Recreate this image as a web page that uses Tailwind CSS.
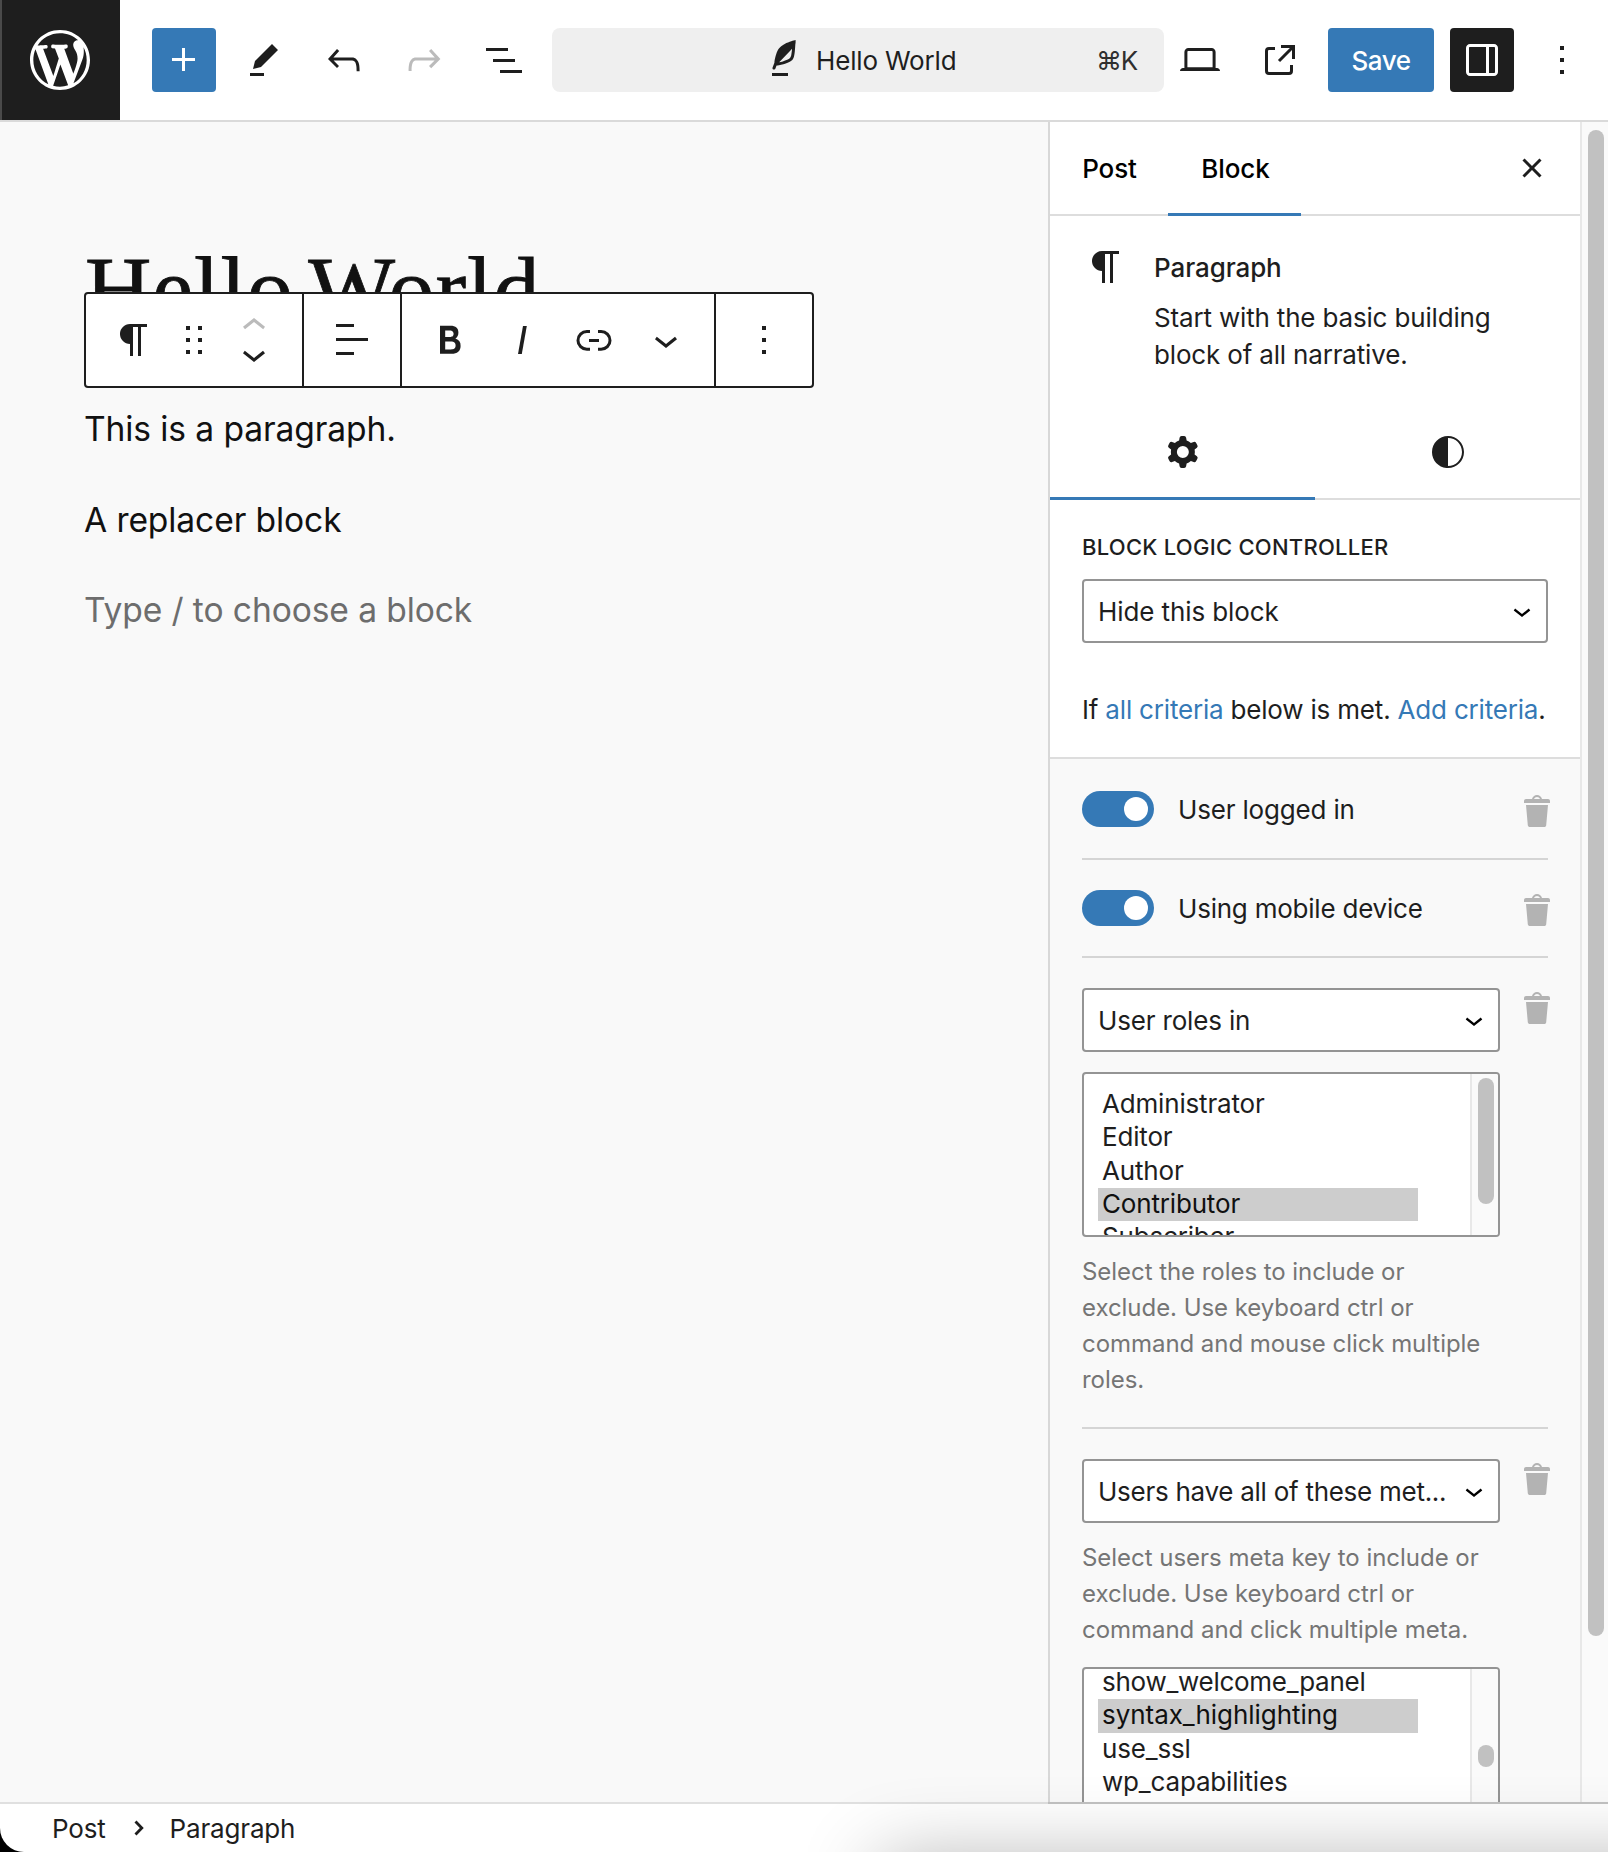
<!DOCTYPE html>
<html lang="en">
<head>
<meta charset="utf-8">
<title>Hello World</title>
<script src="https://cdn.jsdelivr.net/npm/@tailwindcss/browser@4"></script>
</head>
<body class="bg-black">
<svg class="hidden" aria-hidden="true">
  <symbol id="trash" viewBox="0 0 20 20"><path d="M12 4h3c.6 0 1 .4 1 1v1H3V5c0-.6.5-1 1-1h3c.2-1.1 1.3-2 2.5-2s2.3.9 2.5 2zM8 4h3c-.2-.6-.9-1-1.5-1S8.2 3.4 8 4zM4 7h11l-.9 10.1c0 .5-.5.9-1 .9H5.9c-.5 0-.9-.4-1-.9L4 7z"/></symbol>
  <symbol id="chevron-down" viewBox="0 0 24 24"><path d="M17.5 11.6L12 16l-5.5-4.4.9-1.2L12 14l4.5-3.6 1 1.2z"/></symbol>
  <symbol id="more" viewBox="0 0 24 24"><path d="M13 19h-2v-2h2v2zm0-6h-2v-2h2v2zm0-6h-2V5h2v2z"/></symbol>
  <symbol id="paragraph" viewBox="0 0 24 24"><path d="m9.99609 14v-.2251l.00391.0001v6.225h1.5v-14.5h2.5v14.5h1.5v-14.5h3v-1.5h-8.50391c-2.76142 0-5 2.23858-5 5 0 2.7614 2.23858 5 5 5z"/></symbol>
</svg>

<div class="relative flex h-[1852px] w-[1608px] flex-col overflow-hidden rounded-bl-[24px] bg-white font-[Inter,sans-serif] text-[26px] leading-[36px] tracking-[-0.17px] text-[#1e1e1e]">

  <!-- Top bar -->
  <header class="flex h-[122px] shrink-0 items-center border-b-2 border-[#dadada]">
    <a class="flex h-[120px] w-[120px] items-center justify-center border-l-2 border-[#4a4a4a] bg-[#1e1e1e] pr-0.5">
      <svg class="size-[72px] fill-white" viewBox="-2 -2 24 24"><path d="M20 10c0-5.51-4.49-10-10-10C4.48 0 0 4.49 0 10c0 5.52 4.48 10 10 10 5.51 0 10-4.48 10-10zM7.78 15.37L4.37 6.22c.55-.02 1.17-.08 1.17-.08.5-.06.44-1.13-.06-1.11 0 0-1.45.11-2.37.11-.18 0-.37 0-.58-.01C4.12 2.69 6.87 1.11 10 1.11c2.33 0 4.45.87 6.05 2.34-.68-.11-1.65.39-1.65 1.58 0 .74.45 1.36.9 2.1.35.61.55 1.36.55 2.46 0 1.49-1.4 5-1.4 5l-3.03-8.37c.54-.02.82-.17.82-.17.5-.05.44-1.25-.06-1.22 0 0-1.44.12-2.38.12-.87 0-2.33-.12-2.33-.12-.5-.03-.56 1.2-.06 1.22l.92.08 1.26 3.41zM17.41 10c.24-.64.74-1.87.43-4.25.7 1.29 1.05 2.71 1.05 4.25 0 3.29-1.73 6.24-4.4 7.78.97-2.59 1.94-5.2 2.92-7.78zM6.1 18.09C3.12 16.65 1.11 13.53 1.11 10c0-1.3.23-2.48.72-3.59C3.25 10.3 4.67 14.2 6.1 18.09zm4.03-6.63l2.58 6.98c-.86.29-1.76.45-2.71.45-.79 0-1.57-.11-2.29-.33.81-2.38 1.62-4.74 2.42-7.1z"/></svg>
    </a>
    <div class="ml-8 flex gap-4">
      <button class="flex size-16 items-center justify-center rounded-[4px] bg-[#3579b6]"><svg class="size-12 fill-white" viewBox="0 0 24 24"><path d="M11 12.5V17.5H12.5V12.5H17.5V11H12.5V6H11V11H6V12.5H11Z"/></svg></button>
      <button class="flex size-16 items-center justify-center"><svg class="size-12 fill-[#1e1e1e]" viewBox="0 0 24 24"><path d="m19 7-3-3-8.5 8.5-1 4 4-1L19 7Zm-7 11.5H5V20h7v-1.5Z"/></svg></button>
      <button class="flex size-16 items-center justify-center"><svg class="size-12 fill-[#1e1e1e]" viewBox="0 0 24 24"><path d="M18.3 11.7c-.6-.6-1.4-.9-2.3-.9H6.7l2.9-3.3-1.1-1-4.5 5L8.5 16l1-1-2.7-2.7H16c.5 0 .9.2 1.3.5 1 1 1 3.4 1 4.5v.3h1.5v-.2c0-1.5 0-4.3-1.5-5.7z"/></svg></button>
      <button class="flex size-16 items-center justify-center"><svg class="size-12 fill-[#bbbbbb]" viewBox="0 0 24 24"><path d="M15.6 6.5l-1.1 1 2.9 3.3H8c-.9 0-1.7.3-2.3.9-1.4 1.5-1.4 4.2-1.4 5.6v.2h1.5v-.3c0-1.1 0-3.5 1-4.5.3-.3.7-.5 1.3-.5h9.2L14.5 15l1.1 1.1 4.6-4.6-4.6-5z"/></svg></button>
      <button class="flex size-16 items-center justify-center"><svg class="size-12 fill-[#1e1e1e]" viewBox="0 0 24 24"><path d="M3 6h11v1.5H3V6Zm3.5 5.5h11V13h-11v-1.5ZM21 17H10v1.5h11V17Z"/></svg></button>
    </div>
    <div class="ml-4 flex h-16 w-[612px] items-center rounded-[8px] bg-[#efefef] pl-[208px] pr-[27px]">
      <svg class="size-12 fill-[#1e1e1e]" viewBox="0 0 24 24"><path d="M17.8 2l-.9.3c-.1 0-3.6 1-5.2 2.1C10 5.5 9.3 6.5 8.9 7.1c-.6.9-1.7 4.7-1.7 6.3l-.9 2.3c-.2.4 0 .8.4 1 .1 0 .2.1.3.1.3 0 .6-.2.7-.5l.6-1.5c.3 0 .7-.1 1.2-.2.7-.1 1.4-.3 2.2-.5.8-.2 1.6-.5 2.4-.8.7-.3 1.4-.7 1.9-1.2s.8-1.2 1-1.9c.2-.7.3-1.6.4-2.4.1-.8.1-1.7.2-2.5 0-.8.1-1.5.2-2.1V2zm-1.9 5.6c-.1.8-.2 1.5-.3 2.1-.2.6-.4 1-.6 1.3-.3.3-.8.6-1.4.9-.7.3-1.4.5-2.2.8-.6.2-1.3.3-1.8.4L15 7.5c.3-.3.6-.7 1-1.1 0 .4 0 .8-.1 1.2zM6 20h8v-1.5H6V20z"/></svg>
      <span class="ml-2 pt-0.5">Hello World</span>
      <span class="ml-auto pt-0.5 tracking-[-1.3px] text-[#2f2f2f]">⌘K</span>
    </div>
    <svg class="ml-3 size-12 fill-[#1e1e1e]" viewBox="0 0 24 24"><path d="M20.5 16h-.7V8c0-1.1-.9-2-2-2H6.2c-1.1 0-2 .9-2 2v8h-.7c-.8 0-1.5.7-1.5 1.5h20c0-.8-.7-1.5-1.5-1.5zM5.7 8c0-.3.2-.5.5-.5h11.6c.3 0 .5.2.5.5v7.6H5.7V8z"/></svg>
    <svg class="ml-8 size-12 fill-[#1e1e1e]" viewBox="0 0 24 24"><path d="M19.5 4.5h-7V6h4.44l-5.97 5.97 1.06 1.06L18 7.06v4.44h1.5v-7Zm-13 1a2 2 0 0 0-2 2v10a2 2 0 0 0 2 2h10a2 2 0 0 0 2-2v-3H17v3a.5.5 0 0 1-.5.5h-10a.5.5 0 0 1-.5-.5v-10a.5.5 0 0 1 .5-.5h3V5.5h-3Z"/></svg>
    <button class="ml-6 h-16 w-[106px] rounded-[4px] bg-[#3579b6] pt-0.5 font-medium tracking-[-0.5px] text-white">Save</button>
    <button class="ml-4 flex size-16 items-center justify-center rounded-[4px] bg-[#1e1e1e]"><svg class="size-12 fill-white" viewBox="0 0 24 24"><path d="M18 4H6c-1.1 0-2 .9-2 2v12c0 1.1.9 2 2 2h12c1.1 0 2-.9 2-2V6c0-1.1-.9-2-2-2zm-4 14.5H6c-.3 0-.5-.2-.5-.5V6c0-.3.2-.5.5-.5h8v13zm4.5-.5c0 .3-.2.5-.5.5h-2.5v-13H18c.3 0 .5.2.5.5v12z"/></svg></button>
    <svg class="ml-6 size-12 fill-[#1e1e1e]"><use href="#more"/></svg>
  </header>

  <div class="flex h-[1680px] shrink-0">

    <!-- Canvas -->
    <main class="relative w-[1048px] bg-[#f9f9f9] pl-[84px] pt-[115px] text-[33.6px] leading-[52px] tracking-[-0.1px] text-[#111111]">
      <h1 class="h-[150px] whitespace-nowrap pl-px font-['Liberation_Serif',serif] text-[92px] leading-[104px] tracking-[0.9px] [-webkit-text-stroke:0.8px_#111111] [word-spacing:-8px]">Hello World</h1>
      <p class="mt-[16px]">This is a paragraph.</p>
      <p class="mt-[39px]">A replacer block</p>
      <p class="mt-[38px] text-[#6d6d6d]">Type / to choose a block</p>

      <!-- Block toolbar floats over the title -->
      <div class="absolute left-[84px] top-[170px] flex h-24 w-[730px] rounded-[4px] border-2 border-[#1e1e1e] bg-white">
        <div class="flex w-[218px] items-center border-r-2 border-[#1e1e1e] pl-6">
          <svg class="size-12 fill-[#1e1e1e]"><use href="#paragraph"/></svg>
          <svg class="ml-3 size-12 fill-[#1e1e1e]" viewBox="0 0 24 24"><path d="M8 7h2V5H8v2zm0 6h2v-2H8v2zm0 6h2v-2H8v2zm6-14v2h2V5h-2zm0 8h2v-2h-2v2zm0 6h2v-2h-2v2z"/></svg>
          <div class="ml-3 flex h-[76px] flex-col justify-between">
            <svg class="size-12 shrink-0 fill-[#bbbbbb]" viewBox="0 0 24 24"><path d="M6.5 12.4L12 8l5.5 4.4-.9 1.2L12 10l-4.5 3.6-1-1.2z"/></svg>
            <svg class="-mt-5 size-12 shrink-0 fill-[#1e1e1e]"><use href="#chevron-down"/></svg>
          </div>
        </div>
        <div class="flex w-[98px] items-center justify-center border-r-2 border-[#1e1e1e]">
          <svg class="size-12 fill-[#1e1e1e]" viewBox="0 0 24 24"><path d="M13 5.5H4V4h9v1.5Zm7 7H4V11h16v1.5Zm-7 7H4V18h9v1.5Z"/></svg>
        </div>
        <div class="flex w-[314px] items-center gap-6 border-r-2 border-[#1e1e1e] pl-6">
          <svg class="size-12 fill-[#1e1e1e]" viewBox="0 0 24 24"><path d="M14.7 11.3c1-.6 1.5-1.6 1.5-3 0-2.3-1.3-3.4-4-3.4H7v14h5.8c1.4 0 2.5-.3 3.3-1 .8-.7 1.2-1.7 1.2-2.9.1-1.9-.8-3.1-2.6-3.7zm-5.1-4h2.3c.6 0 1.1.1 1.4.4.3.3.5.7.5 1.2s-.2 1-.5 1.2c-.3.3-.8.4-1.4.4H9.6V7.3zm4.6 9c-.4.3-1 .4-1.7.4H9.6v-3.9h2.9c.7 0 1.3.2 1.7.5.4.3.6.8.6 1.5s-.2 1.2-.6 1.5z"/></svg>
          <svg class="size-12 fill-[#1e1e1e]" viewBox="0 0 24 24"><path d="M12.5 5L10 19h1.9l2.5-14z"/></svg>
          <svg class="size-12 fill-[#1e1e1e]" viewBox="0 0 24 24"><path d="M10 17.389H8.444A5.194 5.194 0 1 1 8.444 7H10v1.5H8.444a3.694 3.694 0 0 0 0 7.389H10v1.5ZM14 7h1.556a5.194 5.194 0 0 1 0 10.39H14v-1.5h1.556a3.694 3.694 0 0 0 0-7.39H14V7Zm-4.5 6h5v-1.5h-5V13Z"/></svg>
          <svg class="size-12 fill-[#1e1e1e]"><use href="#chevron-down"/></svg>
        </div>
        <div class="flex flex-1 items-center justify-center">
          <svg class="size-12 fill-[#1e1e1e]"><use href="#more"/></svg>
        </div>
      </div>
    </main>

    <!-- Settings sidebar -->
    <aside class="w-[534px] shrink-0 overflow-hidden border-x-2 border-l-[#d8d8d8] border-r-[#e8e8e8]">
      <div class="flex h-[94px] border-b-2 border-[#dddddd] font-medium tracking-[-0.1px] text-black">
        <div class="flex w-[118px] items-center justify-center pl-px pt-0.5">Post</div>
        <div class="-mb-0.5 flex w-[133px] items-center justify-center border-b-[3px] border-[#3579b6] pl-0.5 pt-[3px]">Block</div>
        <svg class="ml-auto mr-6 mt-[22px] size-12 fill-[#1e1e1e]" viewBox="0 0 24 24"><path d="M12 13.06l3.712 3.713 1.061-1.06L13.061 12l3.712-3.712-1.06-1.06L12 10.938 8.288 7.227l-1.061 1.06L10.939 12l-3.712 3.712 1.06 1.061L12 13.061z"/></svg>
      </div>

      <div class="flex h-[188px] pl-8 pt-[27px]">
        <svg class="size-12 shrink-0 fill-[#1e1e1e]"><use href="#paragraph"/></svg>
        <div class="ml-6 mt-[7px]">
          <h2 class="font-medium tracking-[-0.1px]">Paragraph</h2>
          <p class="mt-[14px] w-[360px] leading-[36.6px]">Start with the basic building<br>block of all narrative.</p>
        </div>
      </div>

      <div class="flex h-24 border-b-2 border-[#dddddd]">
        <div class="-mb-0.5 flex w-[265px] items-center justify-center border-b-[3px] border-[#3579b6] pt-[3px]">
          <svg class="size-12 fill-[#1e1e1e]" viewBox="0 0 24 24"><path fill-rule="evenodd" clip-rule="evenodd" d="M10.289 4.836A1 1 0 0111.275 4h1.306a1 1 0 01.987.836l.244 1.466c.787.26 1.503.679 2.108 1.218l1.393-.522a1 1 0 011.216.437l.653 1.13a1 1 0 01-.23 1.273l-1.148.944a6.025 6.025 0 010 2.435l1.149.946a1 1 0 01.23 1.272l-.653 1.13a1 1 0 01-1.216.437l-1.394-.522c-.605.54-1.32.958-2.108 1.218l-.244 1.466a1 1 0 01-.987.836h-1.306a1 1 0 01-.986-.836l-.244-1.466a5.995 5.995 0 01-2.108-1.218l-1.394.522a1 1 0 01-1.217-.436l-.653-1.131a1 1 0 01.23-1.272l1.149-.946a6.026 6.026 0 010-2.435l-1.148-.944a1 1 0 01-.23-1.272l.653-1.131a1 1 0 011.217-.437l1.393.522a5.994 5.994 0 012.108-1.218l.244-1.466zM14.929 12a3 3 0 11-6 0 3 3 0 016 0z"/></svg>
        </div>
        <div class="flex w-[265px] items-center justify-center pt-0.5">
          <svg class="size-12 fill-[#1e1e1e]" viewBox="0 0 24 24"><path d="M12 4c-4.4 0-8 3.6-8 8v.1c0 4.1 3.2 7.5 7.2 7.9h.8c4.4 0 8-3.6 8-8s-3.6-8-8-8zm0 15V5c3.9 0 7 3.1 7 7s-3.1 7-7 7z"/></svg>
        </div>
      </div>

      <section class="flex h-[259px] flex-col border-b-2 border-[#dddddd] px-8 pt-[33px]">
        <h3 class="text-[22px] font-medium uppercase leading-[28px] tracking-[0.25px]">Block Logic Controller</h3>
        <div class="mt-[18px] flex h-16 w-[466px] shrink-0 items-center justify-between rounded-[4px] border-2 border-[#949494] bg-white pl-[14px] pr-[6px]">
          <span class="pt-0.5 tracking-[-0.1px]">Hide this block</span>
          <svg class="size-9 fill-black"><use href="#chevron-down"/></svg>
        </div>
        <p class="mt-[49px] whitespace-nowrap tracking-[-0.19px]">If <a class="text-[#3579b6]">all criteria</a> below is met. <a class="text-[#3579b6]">Add criteria</a>.</p>
      </section>

      <section class="h-[1200px] bg-[#f9f9f9] pl-8">
        <div class="flex h-[101px] w-[466px] items-start border-b-2 border-[#d5d5d5] pt-8">
          <div class="flex h-9 w-[72px] items-center justify-end rounded-full bg-[#3579b6] pr-1.5"><span class="size-6 rounded-full bg-white"></span></div>
          <span class="ml-6 pt-px">User logged in</span>
          <svg class="-mr-2.5 ml-auto size-10 fill-[#b3b3b3]"><use href="#trash"/></svg>
        </div>
        <div class="flex h-[98px] w-[466px] items-start border-b-2 border-[#d5d5d5] pt-[30px]">
          <div class="flex h-9 w-[72px] items-center justify-end rounded-full bg-[#3579b6] pr-1.5"><span class="size-6 rounded-full bg-white"></span></div>
          <span class="ml-6 pt-px tracking-[-0.22px]">Using mobile device</span>
          <svg class="-mr-2.5 ml-auto size-10 fill-[#b3b3b3]"><use href="#trash"/></svg>
        </div>

        <div class="flex h-[471px] w-[466px] items-start border-b-2 border-[#d5d5d5] pt-[30px]">
          <div class="w-[418px] shrink-0">
            <div class="flex h-16 items-center justify-between rounded-[4px] border-2 border-[#949494] bg-white pl-[14px] pr-[6px]">
              <span class="pt-0.5">User roles in</span>
              <svg class="size-9 fill-black"><use href="#chevron-down"/></svg>
            </div>
            <div class="mt-5 flex h-[165px] overflow-hidden rounded-[4px] border-2 border-[#949494] bg-white">
              <ul class="w-[334px] pl-[14px] pt-[14px] leading-[31.3px]">
                <li class="h-[33.3px] pl-1">Administrator</li>
                <li class="h-[33.3px] pl-1">Editor</li>
                <li class="h-[33.3px] pl-1">Author</li>
                <li class="h-[33.3px] bg-[#cdcdcd] pl-1 text-[#101010]">Contributor</li>
                <li class="h-[33.3px] pl-1">Subscriber</li>
              </ul>
              <div class="ml-auto w-[28px] border-l-2 border-[#e8e8e8] bg-[#fafafa] pl-1.5 pt-1"><div class="h-[126px] w-4 rounded-full bg-[#c1c1c1]"></div></div>
            </div>
            <p class="mt-[17px] text-[24px] leading-[36px] tracking-[-0.05px] text-[#757575]">Select the roles to include or<br>exclude. Use keyboard ctrl or<br>command and mouse click multiple<br>roles.</p>
          </div>
          <svg class="-mr-2.5 ml-auto size-10 shrink-0 fill-[#b3b3b3]"><use href="#trash"/></svg>
        </div>

        <div class="flex w-[466px] items-start pt-[30px]">
          <div class="w-[418px] shrink-0">
            <div class="flex h-16 items-center justify-between rounded-[4px] border-2 border-[#949494] bg-white pl-[14px] pr-[6px]">
              <span class="pt-0.5 tracking-[-0.27px]">Users have all of these met...</span>
              <svg class="size-9 fill-black"><use href="#chevron-down"/></svg>
            </div>
            <p class="mt-[17px] text-[24px] leading-[36px] tracking-[-0.03px] text-[#757575]">Select users meta key to include or<br>exclude. Use keyboard ctrl or<br>command and click multiple meta.</p>
            <div class="mt-[19px] flex h-[165px] overflow-hidden rounded-[4px] border-2 border-[#949494] bg-white">
              <ul class="w-[334px] pl-[14px] leading-[32.3px]">
                <li class="-mt-[3px] h-[33.3px] pl-1 tracking-[-0.27px]">show_welcome_panel</li>
                <li class="h-[33.3px] bg-[#cdcdcd] pl-1 tracking-[-0.05px] text-[#101010]">syntax_highlighting</li>
                <li class="h-[33.3px] pl-1">use_ssl</li>
                <li class="h-[33.3px] pl-1">wp_capabilities</li>
              </ul>
              <div class="ml-auto w-[28px] border-l-2 border-[#e8e8e8] bg-[#fafafa] pl-1.5 pt-[76px]"><div class="h-[22px] w-4 rounded-full bg-[#c1c1c1]"></div></div>
            </div>
          </div>
          <svg class="-mr-2.5 ml-auto size-10 shrink-0 fill-[#b3b3b3]"><use href="#trash"/></svg>
        </div>
      </section>
    </aside>

    <!-- Scrollbar -->
    <div class="flex-1 bg-[#fafafa] pl-1.5 pt-2"><div class="h-[1506px] w-4 rounded-full bg-[#c1c1c1]"></div></div>
  </div>

  <!-- Breadcrumb -->
  <footer class="flex h-[50px] shrink-0 flex-col">
    <div class="flex h-0.5 shrink-0"><div class="w-[1048px] bg-[#e0e0e0]"></div><div class="flex-1 bg-[#c2c2c2]"></div></div>
    <nav class="flex h-12 items-center pl-[52px]">
      <span class="pt-0.5">Post</span>
      <svg class="ml-[28px] h-4 w-[10px] fill-none stroke-[#1e1e1e] stroke-[2.8]" viewBox="0 0 10 16"><path d="M1.5 1.5 7.8 8l-6.3 6.5"/></svg>
      <span class="ml-[26px] pt-0.5">Paragraph</span>
    </nav>
  </footer>

  <!-- Soft shadow rising from below the window -->
  <div class="absolute left-[880px] top-[1860px] h-[200px] w-[900px] shadow-[0_0_80px_rgba(0,0,0,0.3)]"></div>
</div>
</body>
</html>
